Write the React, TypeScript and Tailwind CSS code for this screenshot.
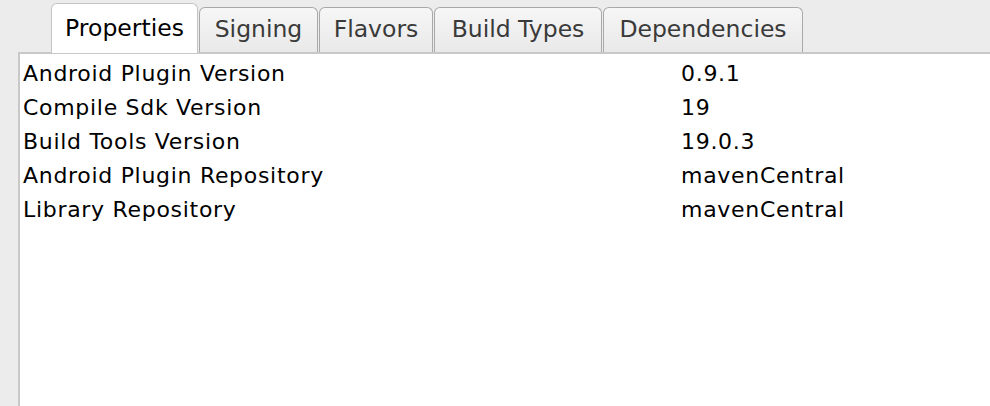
const TABS = [
  { label: 'Properties', width: 'w-[147px]', active: true },
  { label: 'Signing', width: 'w-[119px]' },
  { label: 'Flavors', width: 'w-[114px]' },
  { label: 'Build Types', width: 'w-[168px]' },
  { label: 'Dependencies', width: 'w-[200px]' },
];

const ROWS: [string, string][] = [
  ['Android Plugin Version', '0.9.1'],
  ['Compile Sdk Version', '19'],
  ['Build Tools Version', '19.0.3'],
  ['Android Plugin Repository', 'mavenCentral'],
  ['Library Repository', 'mavenCentral'],
];

export default function App() {
  return (
    <div
      className="w-[990px] h-[406px] bg-[#ececec] overflow-hidden flex flex-col pt-[3px]"
      style={{ fontFamily: '"DejaVu Sans", "Lucida Grande", sans-serif' }}
    >
      {/* Tab strip */}
      <div className="flex items-end h-[49px] pl-[51px] relative z-10">
        {TABS.map((tab) =>
          tab.active ? (
            <div
              key={tab.label}
              className={`${tab.width} h-[50px] -mb-px bg-white border border-b-0 border-[#c4c4c4] rounded-t-[6px] flex items-center justify-center text-[23.5px] text-black`}
            >
              {tab.label}
            </div>
          ) : (
            <div
              key={tab.label}
              className={`${tab.width} h-[45px] ml-px bg-gradient-to-b from-[#f6f6f6] to-[#e9e9e9] border border-b-0 border-[#a9a9a9] rounded-t-[6px] flex items-center justify-center text-[23.5px] text-[#3a3a3a]`}
            >
              {tab.label}
            </div>
          )
        )}
      </div>

      {/* Properties panel */}
      <div className="flex-1 ml-[18px] bg-white border-l-2 border-t-2 border-[#c8c8c8] pt-[2px] pl-[3px]">
        {ROWS.map(([name, value]) => (
          <div key={name} className="flex items-center h-[34px] text-[22px] tracking-[0.7px] text-black">
            <span className="w-[658px]">{name}</span>
            <span>{value}</span>
          </div>
        ))}
      </div>
    </div>
  );
}
